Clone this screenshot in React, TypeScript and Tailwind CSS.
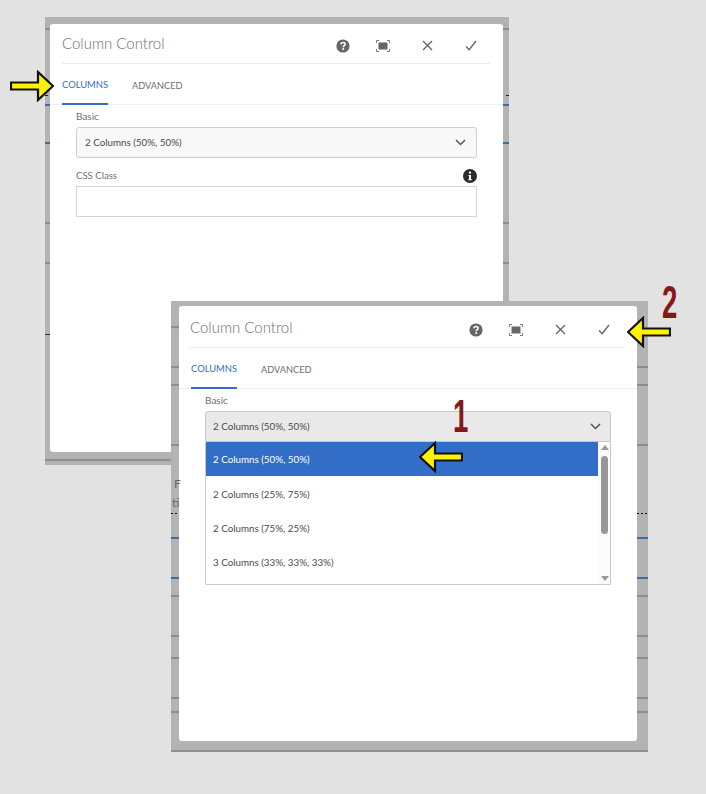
import * as React from "react";

type Tick = { y: number; color?: string; h?: number; w?: number };

const grey = "#8d8d8d";
const blue = "#3b6ea5";
const dashes = "repeating-linear-gradient(90deg,#111 0 2px,transparent 2px 4px)";

function Arrow({ dir, className }: { dir: "left" | "right"; className: string }) {
  return (
    <svg className={className} width="44" height="32" viewBox="0 0 44 32">
      <path
        d={
          dir === "right"
            ? "M1 12.5H28V2L43 16L28 30V19.5H1Z"
            : "M43 12.5H16V2L1 16L16 30V19.5H43Z"
        }
        fill="#fff200"
        stroke="#111"
        strokeWidth="2.2"
      />
    </svg>
  );
}

function HelpIcon() {
  return (
    <svg width="14" height="14" viewBox="0 0 14 14">
      <circle cx="7" cy="7" r="6.6" fill="#666" />
      <path d="M4.9 5.4C5 4.1 5.9 3.4 7.1 3.4C8.4 3.4 9.2 4.2 9.2 5.2C9.2 6.6 7.2 6.7 7.2 8.2" fill="none" stroke="#fff" strokeWidth="1.5" />
      <rect x="6.3" y="9.2" width="1.8" height="1.7" fill="#fff" />
    </svg>
  );
}

function FullscreenIcon() {
  return (
    <svg width="14" height="12" viewBox="0 0 14 12">
      <rect x="2.5" y="2.5" width="9" height="7" fill="#666" />
      <path d="M0.5 3V0.5H3M11 0.5H13.5V3M13.5 9V11.5H11M3 11.5H0.5V9" fill="none" stroke="#777" strokeWidth="1" />
    </svg>
  );
}

function CloseIcon() {
  return (
    <svg width="11" height="11" viewBox="0 0 11 11">
      <path d="M1 1L10 10M10 1L1 10" stroke="#666" strokeWidth="1.4" fill="none" />
    </svg>
  );
}

function CheckIcon() {
  return (
    <svg width="12" height="11" viewBox="0 0 12 11">
      <path d="M1 6.5L4.2 9.7L11 1" stroke="#666" strokeWidth="1.4" fill="none" />
    </svg>
  );
}

function Chevron() {
  return (
    <svg width="11" height="7" viewBox="0 0 11 7">
      <path d="M1 1L5.5 5.5L10 1" stroke="#555" strokeWidth="1.5" fill="none" />
    </svg>
  );
}

function InfoIcon() {
  return (
    <svg width="14" height="14" viewBox="0 0 14 14">
      <circle cx="7" cy="7" r="7" fill="#2c2c2c" />
      <rect x="6" y="2.6" width="2" height="2" fill="#fff" />
      <path d="M5.4 5.9H8V10.2H8.8V11.3H5.3V10.2H6.1V7H5.4Z" fill="#fff" />
    </svg>
  );
}

// title row + tab row are the same in both dialogs apart from small offsets
function DialogTop({ titleLeft, iconRight, tabLeft }: { titleLeft: string; iconRight: string; tabLeft: string }) {
  return (
    <>
      <div className={`${titleLeft} ${iconRight}`}>
        <div className="flex items-center justify-between border-b border-[#ececec] pb-[9px]">
          <span className="-translate-y-px text-[15px] font-light leading-[20px] text-[#6e6e6e]">Column Control</span>
          <div className="flex items-center gap-[30px] pr-[var(--icon-pad)] pt-[3px]">
            <div className="-mr-[4px] flex w-[14px] justify-center"><HelpIcon /></div>
            <div className="flex w-[14px] justify-center"><FullscreenIcon /></div>
            <div className="flex w-[14px] justify-center"><CloseIcon /></div>
            <div className="flex w-[14px] justify-center"><CheckIcon /></div>
          </div>
        </div>
      </div>
      <div className={`flex h-[41px] gap-[24px] border-b border-[#f0f0f0] ${tabLeft}`}>
        <div className="-mb-px flex items-center border-b-2 border-[#326ec8] pt-[3px] text-[9.4px] text-[#326ec8]">COLUMNS</div>
        <div className="flex items-center pt-[3px] text-[9.2px] text-[#6e6e6e]">ADVANCED</div>
      </div>
    </>
  );
}

function Frame({
  className,
  panel,
  gutterLeft,
  gutterRight,
  leftTicks,
  rightTicks,
  children,
}: {
  className: string;
  panel: string;
  gutterLeft: number;
  gutterRight: number;
  leftTicks: Tick[];
  rightTicks: Tick[];
  children: React.ReactNode;
}) {
  return (
    <div className={`absolute flex flex-col bg-[#b3b3b3] ${className}`}>
      {leftTicks.map((t) => (
        <div key={"l" + t.y} className="absolute left-0" style={{ top: t.y, width: t.w ?? gutterLeft, height: t.h ?? 1.5, background: t.color ?? grey }} />
      ))}
      {rightTicks.map((t) => (
        <div key={"r" + t.y} className="absolute right-0" style={{ top: t.y, width: t.w ?? gutterRight, height: t.h ?? 1.5, background: t.color ?? grey }} />
      ))}
      <div className={`relative rounded-[3px] bg-white ${panel}`}>{children}</div>
    </div>
  );
}

const options = ["2 Columns (25%, 75%)", "2 Columns (75%, 25%)", "3 Columns (33%, 33%, 33%)"];

const frontTicks: Tick[] = [
  { y: 65 },
  { y: 83 },
  { y: 143 },
  { y: 212, color: dashes, h: 1 },
  { y: 236, color: blue },
  { y: 276, color: blue },
  { y: 294 },
  { y: 334 },
  { y: 356 },
  { y: 396 },
  { y: 410 },
];

export default function App() {
  return (
    <div className="relative h-[794px] w-[706px] overflow-hidden bg-[#e2e2e2] font-['Lato','Noto_Sans',sans-serif]">
      {/* back dialog */}
      <Frame
        className="left-[45px] top-[17px] h-[448px] w-[464px] pl-[5px] pt-[7px]"
        panel="h-[428px] w-[453px]"
        gutterLeft={5}
        gutterRight={6}
        leftTicks={[
          { y: 11 },
          { y: 78, color: "#222", h: 1, w: 3 },
          { y: 87, color: blue },
          { y: 125, color: blue },
          { y: 205 },
          { y: 245 },
          { y: 317, color: "#333", h: 1 },
        ]}
        rightTicks={[
          { y: 11 },
          { y: 78, color: "#222", h: 1, w: 3 },
          { y: 87, color: blue },
          { y: 125, color: blue },
          { y: 205 },
          { y: 245 },
        ]}
      >
        <div className="pt-[10px] [--icon-pad:12px]">
          <DialogTop titleLeft="pl-[12px]" iconRight="pr-[13px]" tabLeft="pl-[12px]" />
          <div className="flex flex-col px-[26px] pt-[5px]">
            <label className="text-[10px] leading-[13px] text-[#707070]">Basic</label>
            <div className="mt-[4px] flex h-[31px] items-center justify-between rounded-[3px] border border-[#cfcfcf] bg-[#f8f8f8] pl-[8px] pr-[10px] text-[9.8px] text-[#4b4b4b]">
              <span>2 Columns (50%, 50%)</span>
              <Chevron />
            </div>
            <div className="mt-[9px] flex h-[18px] items-center justify-between">
              <label className="text-[9.6px] text-[#707070]">CSS Class</label>
              <InfoIcon />
            </div>
            <div className="mt-[1px] h-[31px] border border-[#d4d4d4] bg-white" />
          </div>
        </div>
        <div className="absolute -bottom-[9px] -left-[5px] h-[2px] w-[464px] bg-[#8f8f8f]" />
      </Frame>

      {/* front dialog */}
      <Frame
        className="left-[171px] top-[301px] h-[451px] w-[477px] pl-[8px] pt-[5px]"
        panel="h-[435px] w-[458px]"
        gutterLeft={8}
        gutterRight={11}
        leftTicks={[{ y: 25 }, ...frontTicks]}
        rightTicks={frontTicks}
      >
        <div className="pt-[12px] [--icon-pad:14px]">
          <DialogTop titleLeft="pl-[11px]" iconRight="pr-[12px]" tabLeft="pl-[12px]" />
          <div className="flex flex-col px-[26px] pt-[5px]">
            <label className="text-[10px] leading-[13px] text-[#707070]">Basic</label>
            <div className="mt-[4px] flex h-[31px] items-center justify-between rounded-t-[3px] border border-[#c8c8c8] bg-[#e9e9e9] pl-[7px] pr-[9px] text-[9.8px] text-[#4b4b4b]">
              <span>2 Columns (50%, 50%)</span>
              <Chevron />
            </div>
            <div className="relative flex h-[143px] flex-col rounded-b-[2px] border border-t-0 border-[#c8c8c8] bg-white text-[9.8px] text-[#4b4b4b]">
              <div className="mb-px flex h-[34px] w-[392px] shrink-0 items-center bg-[#326ec8] pl-[7px] text-white">2 Columns (50%, 50%)</div>
              {options.map((o) => (
                <div key={o} className="flex h-[34px] w-[392px] shrink-0 items-center pl-[7px]">
                  {o}
                </div>
              ))}
              <div className="absolute inset-y-0 right-0 flex w-[11px] flex-col items-center bg-[#fbfbfb]">
                <div className="mt-[3px] h-0 w-0 border-x-[4px] border-b-[5px] border-x-transparent border-b-[#999]" />
                <div className="mt-[6px] h-[78px] w-[7px] rounded-full bg-[#979797]" />
                <div className="mt-auto mb-[3px] h-0 w-0 border-x-[4px] border-t-[5px] border-x-transparent border-t-[#999]" />
              </div>
            </div>
          </div>
        </div>
        <div className="absolute -bottom-[11px] -left-[8px] h-[2px] w-[477px] bg-[#8f8f8f]" />
        <span className="absolute -left-[5px] top-[169px] text-[12px] text-[#666]">F</span>
        <span className="absolute -left-[7px] top-[188px] text-[12px] text-[#666]">ti</span>
      </Frame>

      {/* annotations */}
      <Arrow dir="right" className="absolute left-[10px] top-[70px]" />
      <Arrow dir="left" className="absolute left-[627px] top-[316px]" />
      <Arrow dir="left" className="absolute left-[419px] top-[441px]" />
      <span className="absolute left-[448px] top-[392px] scale-x-[0.6] font-['Liberation_Sans',sans-serif] text-[46px] font-bold leading-[48px] text-[#861818]">1</span>
      <span className="absolute left-[657px] top-[278px] scale-x-[0.6] font-['Liberation_Sans',sans-serif] text-[46px] font-bold leading-[48px] text-[#861818]">2</span>
    </div>
  );
}
